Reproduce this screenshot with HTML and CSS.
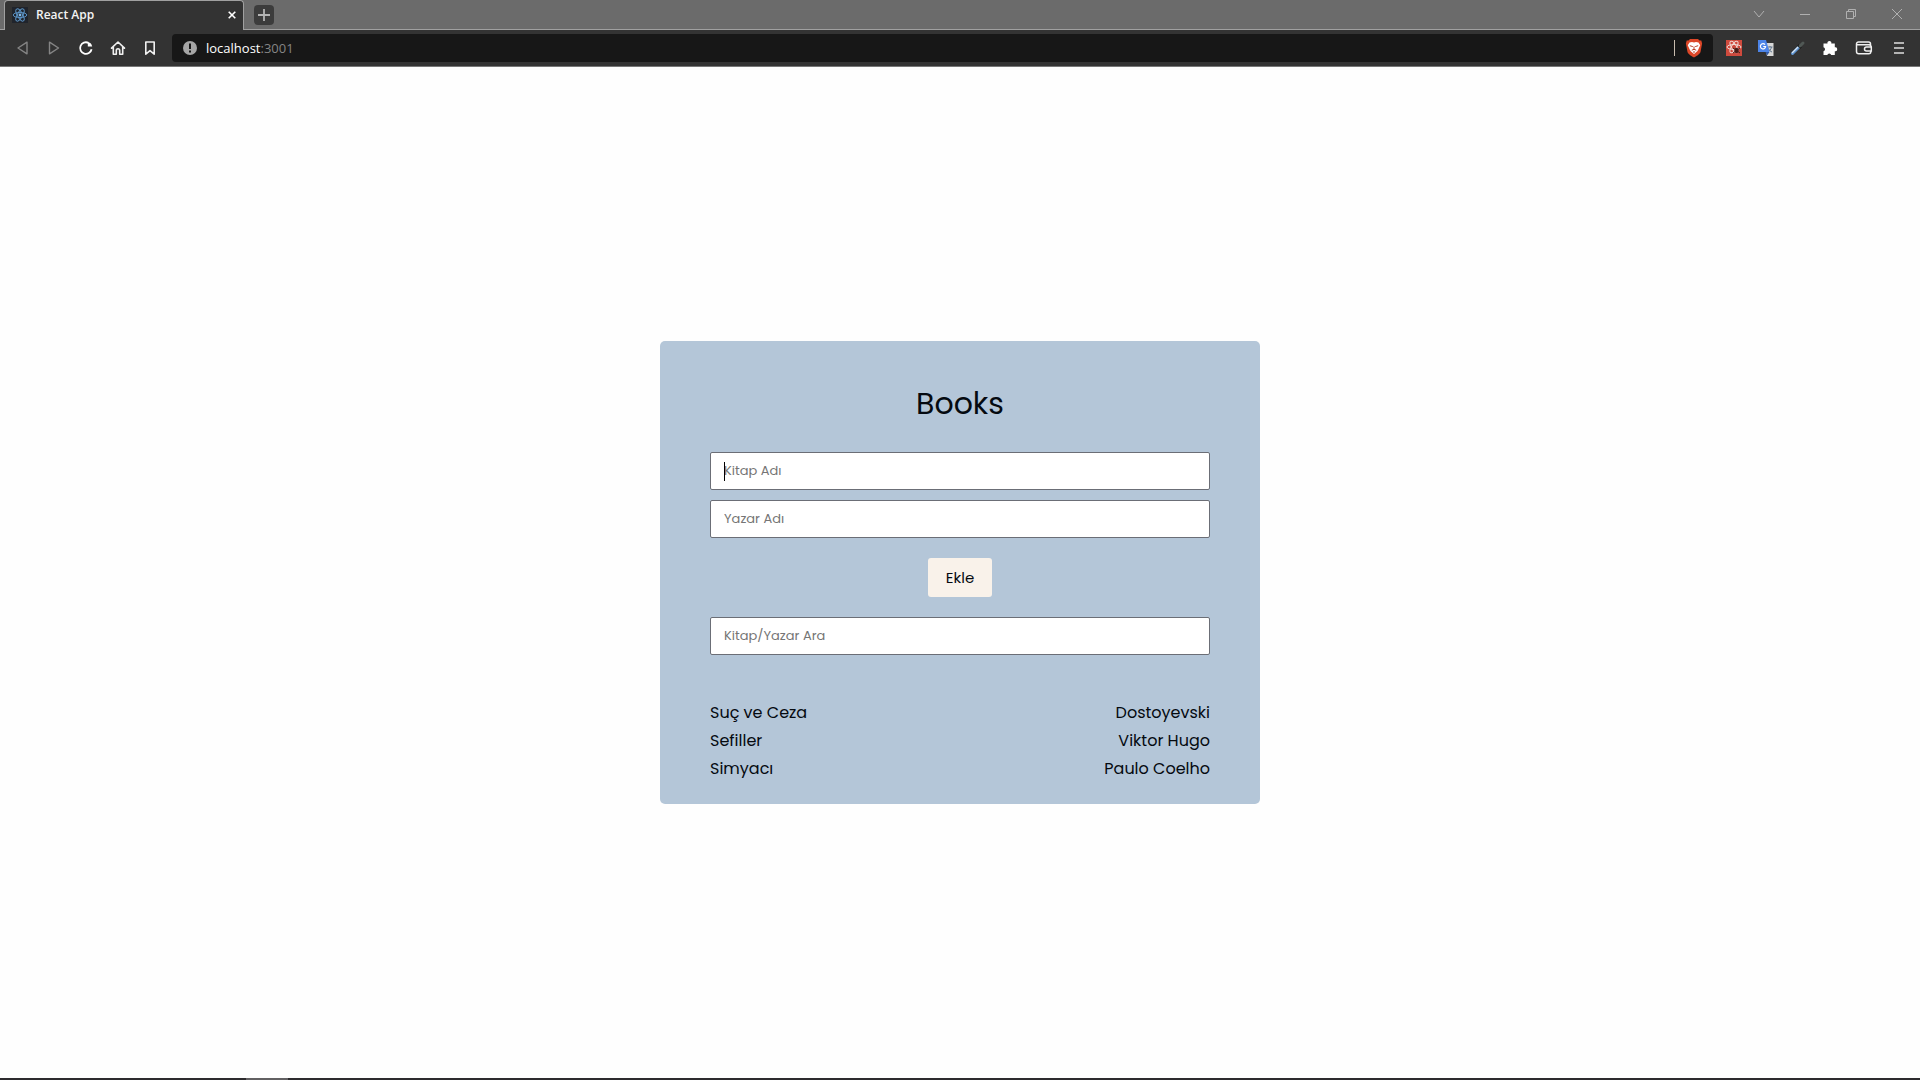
FILE: index.html
```html
<!DOCTYPE html>
<html lang="tr">
<head>
<meta charset="utf-8">
<meta name="viewport" content="width=device-width, initial-scale=1">
<title>React App</title>
<link rel="stylesheet" href="styles.css">
</head>
<body>
<header>
  <div class="tab-strip">
    <div class="tab">
      <svg class="favicon" viewBox="0 0 16 16" aria-hidden="true"><rect width="16" height="16" fill="#20242c"/><g fill="none" stroke="#5b93c4"><ellipse cx="8" cy="8" rx="6.8" ry="2.6"/><ellipse cx="8" cy="8" rx="6.8" ry="2.6" transform="rotate(60 8 8)"/><ellipse cx="8" cy="8" rx="6.8" ry="2.6" transform="rotate(120 8 8)"/></g><circle cx="8" cy="8" r="1.4" fill="#7db8ea"/></svg>
      <span class="tab-title">React App</span>
      <button class="tab-close" aria-label="Close tab"><svg width="8" height="8" viewBox="0 0 8 8"><path d="M.7.7l6.6 6.6M7.3.7L.7 7.3" stroke="#fff" stroke-width="1.6"/></svg></button>
    </div>
    <button class="new-tab" aria-label="New tab"><svg width="12" height="12" viewBox="0 0 12 12"><path d="M6 0v12M0 6h12" stroke="#b4b4b4" stroke-width="1.8"/></svg></button>
    <div class="window-controls">
      <button aria-label="Search tabs"><svg width="12" height="12" viewBox="0 0 12 12"><path d="M1 3l5 6 5-6"/></svg></button>
      <button aria-label="Minimize"><svg width="12" height="12" viewBox="0 0 12 12"><path d="M1 6.5h10"/></svg></button>
      <button aria-label="Restore"><svg width="12" height="12" viewBox="0 0 12 12"><path d="M1.500 3.500h7v7h-7zM3.500 3.500v-2h7v7h-2"/></svg></button>
      <button aria-label="Close"><svg width="12" height="12" viewBox="0 0 12 12"><path d="M1 1l10 10M11 1L1 11"/></svg></button>
    </div>
  </div>
  <div class="toolbar">
    <nav class="nav-buttons">
      <button aria-label="Back"><svg width="16" height="16" viewBox="0 0 16 16"><path d="M13 2.200v11.600L4 8z" fill="none" stroke="#858585" stroke-width="1.4" stroke-linejoin="round"/></svg></button>
      <button aria-label="Forward"><svg width="16" height="16" viewBox="0 0 16 16"><path d="M3.500 2.200v11.600L12.500 8z" fill="none" stroke="#858585" stroke-width="1.4" stroke-linejoin="round"/></svg></button>
      <button aria-label="Reload"><svg width="16" height="16" viewBox="0 0 16 16"><path d="M13.600 9.300A5.800 5.800 0 1 1 10.500 2.900" fill="none" stroke="#fff" stroke-width="1.8"/><path d="M9.800 2.200c2 0 4 1.400 4.400 4.400H9.800z" fill="#fff"/></svg></button>
      <button aria-label="Home"><svg width="16" height="16" viewBox="0 0 16 16"><path d="M1.500 8.200L8 2l6.500 6.200M3.300 7v7.200h3V10.500a1.700 1.700 0 0 1 3.400 0v3.700h3V7" fill="none" stroke="#f0f0f0" stroke-width="1.6" stroke-linejoin="round" stroke-linecap="round"/></svg></button>
      <button aria-label="Bookmark"><svg width="16" height="16" viewBox="0 0 16 16"><path d="M3.800 2h8.400v12.200L8 10.700l-4.200 3.500z" fill="none" stroke="#f0f0f0" stroke-width="1.600" stroke-linejoin="round"/></svg></button>
    </nav>
    <div class="address">
      <svg width="14" height="14" viewBox="0 0 14 14" aria-hidden="true"><circle cx="7" cy="7" r="7" fill="#a6a6a6"/><path d="M7 2.500v5.500M7 9.500v2" stroke="#171717" stroke-width="2"/></svg>
      <span class="url"><span class="host">localhost</span>:3001</span>
      <span class="divider"></span>
      <button class="shield" aria-label="Brave Shields"><svg width="18" height="20" viewBox="0 0 18 20"><path d="M5 1h8l1.500 1.500 1.800 0 .8 3-1.600 8.500c-.4 2-4.500 4.500-6.500 5.500-2-1-6.100-3.500-6.500-5.500L.9 5.500l.8-3 1.800 0z" fill="#dd4728"/><path d="M4.500 4.500L7 4l2 .6L11 4l2.500.5 1.700 2.800-1.900 4.200-1 1.800L9 16l-3.300-2.700-1-1.800L2.800 7.300z" fill="#fff"/><path d="M4.800 7.700l3 .9M13.200 7.700l-3 .9M9 8.500v3M6.800 12.200L9 11.300l2.200.9M8 14h2" stroke="#b94127" stroke-width="1" fill="none"/></svg></button>
    </div>
    <div class="extensions">
      <button aria-label="React extension"><svg width="16" height="16" viewBox="0 0 16 16"><path fill="#cf4a3d" d="M0 0h16v16H0z"/><g fill="none" stroke="#f0d9d5"><ellipse cx="8" cy="7" rx="7" ry="2.500"/><ellipse cx="8" cy="7" rx="6.500" ry="2.500" transform="rotate(60 8 7)"/><ellipse cx="8" cy="7" rx="6.500" ry="2.500" transform="rotate(120 8 7)"/></g><ellipse cx="10.500" cy="10.500" rx="2.200" ry="2.800" fill="#4a1c17"/><path d="M7 8l7 5M7 13l7-5" stroke="#4a1c17"/></svg></button>
      <button aria-label="Translate"><svg width="18" height="18" viewBox="0 0 18 18"><path fill="#d8d8d8" d="M7 4h9.500v13H10z"/><path d="M10.500 8h5M13 7v1M14.500 8c-.5 2.500-2 4-3.500 5M11.500 9.500c.5 1.500 2 3 3.500 3.500" stroke="#62778f" fill="none"/><path fill="#4c84e8" d="M1 1h8l3.500 12H1z"/><path fill="#3159a6" d="M8.500 13h4L10 16.500z"/><path d="M8 5.600A2.600 2.600 0 1 0 8.600 7.500H6.200" fill="none" stroke="#fff" stroke-width="1.200"/></svg></button>
      <button aria-label="Color picker"><svg width="16" height="16" viewBox="0 0 16 16"><path d="M2.500 13.500l6-6" stroke="#5e93cf" stroke-width="3" stroke-linecap="round"/><path d="M2 13l6-6" stroke="#d8e6f3" stroke-width="1.200"/><path d="M8 5l3 3" stroke="#141414" stroke-width="2"/><path d="M10 6l3-3" stroke="#505855" stroke-width="3" stroke-linecap="round"/></svg></button>
      <button aria-label="Extensions"><svg width="16" height="16" viewBox="0 0 16 16"><path d="M1.500 3.500h4a2 2 0 1 1 3.800 0h3.500v3.800a2 2 0 1 1 0 3.900V15H9.200a2 2 0 0 0-3.900 0H1.500v-3.800a2 2 0 0 0 0-3.900z" fill="#fff"/></svg></button>
      <button class="wide" aria-label="Wallet"><svg width="18" height="16" viewBox="0 0 18 16"><path d="M15.500 5.200V4a2 2 0 0 0-2-2H3.500a2 2 0 0 0-2 2v7.500a2.300 2.300 0 0 0 2.300 2.300h10a2 2 0 0 0 2-2V11M1.500 4.800h12.500a2.300 2.300 0 0 1 2.300 2.300V11H11.500a2 2 0 0 1 0-4h4.800" fill="none" stroke="#f0f0f0" stroke-width="1.500"/></svg></button>
      <button class="wide" aria-label="Menu"><svg width="10" height="12" viewBox="0 0 10 12"><path d="M0 1h10M0 6h10M0 11h10" stroke="#e0e0e0" stroke-width="1.700"/></svg></button>
    </div>
  </div>
</header>
<main>
  <section class="card">
    <h1>Books</h1>
    <form class="add-form">
      <label class="field active"><input type="text" placeholder="Kitap Adı" aria-label="Kitap Adı"></label>
      <label class="field"><input type="text" placeholder="Yazar Adı" aria-label="Yazar Adı"></label>
      <button class="add" type="button">Ekle</button>
    </form>
    <label class="field"><input type="text" placeholder="Kitap/Yazar Ara" aria-label="Kitap/Yazar Ara"></label>
    <ul class="books">
      <li><span>Suç ve Ceza</span><span>Dostoyevski</span></li>
      <li><span>Sefiller</span><span>Viktor Hugo</span></li>
      <li><span>Simyacı</span><span>Paulo Coelho</span></li>
    </ul>
  </section>
</main>
<footer><span class="running"></span></footer>
</body>
</html>
```
FILE: styles.css
```css
* { box-sizing: border-box; }
body {
  margin: 0;
  min-height: 100vh;
  display: flex;
  flex-direction: column;
  background: #fefefe;
  color: #050a10;
  font-family: Poppins, Inter, sans-serif;
}
button {
  display: flex;
  align-items: center;
  justify-content: center;
  padding: 0;
  border: 0;
  background: none;
  font: inherit;
  color: inherit;
}
header { font-family: "Segoe UI", "Open Sans", sans-serif; }

.tab-strip {
  display: flex;
  height: 30px;
  padding-left: 4px;
  background: #6b6b6b;
  box-shadow: inset 0 -1px #a0a0a0;
}
.tab {
  display: flex;
  align-items: center;
  width: 240px;
  padding: 0 5px 2px 7px;
  border: 1px solid #a0a0a0;
  border-bottom: 0;
  border-radius: 4px 4px 0 0;
  background: #333;
}
.favicon { width: 16px; height: 16px; }
.tab-title {
  flex: 1;
  margin-left: 8px;
  font-size: 12px;
  font-weight: 600;
  line-height: 16px;
  color: #f4f4f4;
}
.tab-close { width: 12px; height: 16px; }
.new-tab {
  align-self: center;
  width: 20px;
  height: 20px;
  margin-left: 10px;
  border-radius: 4px;
  background: #3c3c3c;
}
.window-controls { display: flex; height: 28px; margin-left: auto; }
.window-controls button { width: 46px; }
.window-controls path { fill: none; stroke: #b0b0b0; }

.toolbar {
  display: flex;
  align-items: center;
  height: 37px;
  padding: 0 4px 0 6px;
  background: #333;
  border-bottom: 1px solid #777;
}
.nav-buttons, .extensions { display: flex; }
.nav-buttons button, .extensions button { width: 32px; height: 28px; }
.extensions .wide { width: 35px; }
.address {
  flex: 1;
  display: flex;
  align-items: center;
  height: 28px;
  margin: 0 5px 0 6px;
  padding: 0 10px 0 11px;
  border-radius: 4px;
  background: #171717;
}
.url { margin-left: 9px; font-size: 13px; line-height: 18px; color: #858585; }
.host { color: #fff; }
.divider { width: 1px; height: 16px; margin-left: auto; background: #c8bcae; }
.shield { width: 18px; height: 20px; margin-left: 10px; }

main { flex: 1; display: flex; align-items: center; justify-content: center; padding: 16px; }
.card {
  width: 100%;
  max-width: 600px;
  padding: 38px 50px 21px;
  border-radius: 5px;
  background: #b4c6d8;
}
h1 {
  margin: 0 0 23px;
  font-size: 30px;
  font-weight: 400;
  line-height: 50px;
  text-align: center;
}
.add-form { display: flex; flex-direction: column; gap: 10px; margin-bottom: 20px; }
.field { display: block; position: relative; }
.field input {
  display: block;
  width: 100%;
  height: 38px;
  padding: 0 13px;
  border: 1px solid #6b6e76;
  border-radius: 2px;
  background: #fff;
  font-family: inherit;
  font-size: 13px;
}
.field input::placeholder { color: #757575; opacity: 1; }
.active::before {
  content: "";
  position: absolute;
  left: 14px;
  top: 10px;
  width: 1px;
  height: 19px;
  background: #000;
}
.add {
  align-self: center;
  height: 39px;
  margin-top: 10px;
  padding: 0 18px;
  border-radius: 3px;
  background: #f9f2ea;
  font-size: 15px;
}
.books { margin: 44px 0 0; padding: 0; list-style: none; font-size: 16px; line-height: 28px; }
.books li { display: flex; justify-content: space-between; }

footer { height: 2px; padding-left: 246px; background: #2d2b2e; }
.running { display: block; width: 42px; height: 2px; background: #626062; }
```
